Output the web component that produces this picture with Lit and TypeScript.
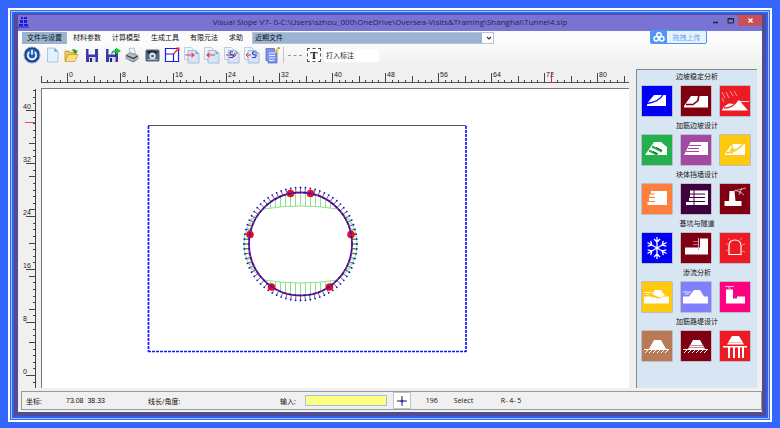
import { LitElement, html, svg, css } from "lit";
import { customElement } from "lit/decorators.js";

const doc = svg`<path d="M1.500 1.500h7l3 3v9h-10z" fill="#eef4fc" stroke="#b4c2d6" stroke-width=".8"/><path d="M5 4.500h8l3 3V17H5z" fill="#d6e4f7" stroke="#9fb3d2" stroke-width=".8"/><path d="M12.500 4.500v3.500H16z" fill="#7ba6da"/>`;
const floppy = svg`<path d="M3 3h12v13H3z" fill="#3a3aa6"/><path d="M5.500 3h6.500v5.500H5.500z" fill="#f6f6ff"/><path d="M6 11h6.500v5H6z" fill="#d8d8f4"/><path d="M7 12h2v4H7z" fill="#23237c"/>`;

const tools = [
  { name: "退出", icon: svg`<circle cx="9" cy="9" r="8" fill="#10387c" stroke="#8fa6c8"/><circle cx="9" cy="9" r="6.500" fill="#1f5fb4"/><path d="M6.500 5.800a4.200 4.200 0 1 0 5 0M9 3.800v5" fill="none" stroke="#fff" stroke-width="1.600"/>` },
  { name: "新建", icon: svg`<path d="M4.500 2h7l3.500 3.500V16H4.500z" fill="#e3f1fc" stroke="#9bbddb" stroke-width=".8"/><path d="M11.500 2v3.500H15z" fill="#4f9be0"/>` },
  { name: "打开", icon: svg`<path d="M2 15V5h4l1.500 1.500H13V9" fill="#f2c75a" stroke="#b98a28" stroke-width=".7"/><path d="M2 15.500l3.500-7H15l-3 7z" fill="#ffdf7c" stroke="#c09033" stroke-width=".7"/><path d="M8 4.500q3-3 5 0h2l-2.500 4-3-4h1.500z" fill="#2f9c25"/>` },
  { name: "保存", icon: floppy },
  { name: "另存为", icon: svg`${floppy}<path d="M8 9q0-5 5-5V1.500l5 3.500-5 3V6Q10 6 8 9z" fill="#1cc92b"/>` },
  { name: "打印", icon: svg`<path d="M6 2.500l5-.5 1.500 6H7z" fill="#f4f7fb" stroke="#93a0ae" stroke-width=".6"/><path d="M3 9l4-2.500 8 3v3.500l-4.500 3L3 12.500z" fill="#b7bcc3" stroke="#666c74" stroke-width=".6"/><path d="M3.500 9.500l7 3 4-2.500" fill="none" stroke="#30343a" stroke-width="1.200"/><path d="M6 14l4 1.500 3-1.500" fill="none" stroke="#4d8fd0"/>` },
  { name: "电话", icon: svg`<rect x="2.500" y="3.500" width="14" height="12" rx="1.500" fill="#52647c"/><path d="M4 5.500q5-2 10.500 0l-.5 2h-2.500L11 6H7.500L7 7.500H4.500z" fill="#1c2733"/><circle cx="9.500" cy="10" r="3.200" fill="#dbe4ec"/><circle cx="9.500" cy="10" r="1.300" fill="#44566c"/><path d="M4.500 13.500h10" stroke="#aab8c8"/>` },
  { name: "缩放", icon: svg`<path d="M2.500 2.500h13v13h-13zM2.500 8h8v7.500" fill="#fff" stroke="#1c1cf0" stroke-width="1.200"/><path d="M10.500 8L15 3" stroke="#e33" stroke-width="1.500"/><path d="M13 1.500h3.500V5z" fill="#e33"/>` },
  { name: "导出", icon: svg`${doc}<path d="M2.500 9h8M8.500 7l2.500 2-2.500 2" fill="none" stroke="#f0384c" stroke-width="1.100"/>` },
  { name: "导入", icon: svg`${doc}<path d="M4 9h8M6.500 7L4 9l2.500 2" fill="none" stroke="#f0384c" stroke-width="1.100"/>` },
  { name: "导出样式", icon: svg`${doc}<path d="M3 9h10M11 7l2 2-2 2" fill="none" stroke="#f0384c"/><path d="M10 6q-3-.8-3 1t2.500 1.800 0 2.700H6" fill="none" stroke="#2a48d0" stroke-width="1.200"/>` },
  { name: "导入样式", icon: svg`${doc}<path d="M3 9h5M5 7L3 9l2 2" fill="none" stroke="#f0384c"/><path d="M12.500 6q-3-.8-3 1t2.500 1.800 0 2.700H9" fill="none" stroke="#2a48d0" stroke-width="1.200"/>` },
  { name: "编辑", icon: svg`<path d="M3 2.500h8.500V5H14v12H5v-2.500H3z" fill="#7f93ee" stroke="#4f62c8" stroke-width=".7"/><path d="M6 7h6M6 9.500h6M6 12h6M6 14.500h5" stroke="#e8edff"/><path d="M11 6.500l3.500-4.500L16 3l-3.500 4.500z" fill="#f4c42c"/><path d="M14.500 2l1-1L17 2l-1 1z" fill="#e43a3a"/>` },
];

const hatch = svg`<path d="M6 19l-3 3M10 19l-3 3M14 19l-3 3M18 19l-3 3M22 19l-3 3M26 19l-3 3" stroke="#fff"/>`;

const groups = [
  { title: "边坡稳定分析", items: [
    { bg: "#0000fa", icon: svg`<path d="M5 20v-2.500L12 9h12v11z" fill="#fff"/><path d="M5 17.500Q17 16 21.500 8" fill="none" stroke="#0000fa" stroke-width="1.300"/>` },
    { bg: "#800012", icon: svg`<path d="M3 21.500V20L10 10h17v11.500z" fill="#fff"/><path d="M5 18.500h7l5-4 1-6" fill="none" stroke="#800012" stroke-width="1.600"/>` },
    { bg: "#ed1c24", icon: svg`<path d="M2 6l3 6M6 6l3 6M10 5l3 5M14 5l3 5M2 12l2 4" stroke="#ffb9b9" stroke-width=".8"/><path d="M2 24.500q1-4 7-7L14 18l5-4 9 10.500z" fill="#fff"/><path d="M4 22q9 0 13-7" fill="none" stroke="#ed1c24" stroke-width="1.500"/><path d="M20 15.500h9" stroke="#fff" stroke-width=".8"/>` } ] },
  { title: "加筋边坡设计", items: [
    { bg: "#22b14c", icon: svg`<path d="M3 20L12 7h7l6 5v8z" fill="#fff"/><path d="M10 11.500l10 5M7 15.500l8 4" stroke="#22b14c" stroke-width="2"/><path d="M14 12.500l6 3M11 16.500l5 2.500" stroke="#164924" stroke-width="1"/>` },
    { bg: "#a349a4", icon: svg`<path d="M3 20L9.500 7H27v13z" fill="#fff"/><path d="M8 10.500h12M7 13.500h11M5 16.500h13" stroke="#a349a4"/>` },
    { bg: "#ffc90e", icon: svg`<path d="M5 20v-1.500L12 9h13v11z" fill="#fff"/><path d="M6 18q11-1 17-9M12 8v11M10 15l5-1" fill="none" stroke="#ffc90e" stroke-width="1.300"/>` } ] },
  { title: "块体挡墙设计", items: [
    { bg: "#ff7f3f", icon: svg`<path d="M13 7h12v14H13zM9 7h5v2.500H9zM7.500 10.500H14V13H7.500zM7 14h7v3H7zM5.500 18H14v3H5.500z" fill="#fff"/>` },
    { bg: "#3f0040", icon: svg`<path d="M9 6.500h18v14.500H5v-3h3v-4h1v-4z" fill="#fff"/><path d="M7 10h17M6 13.500h18M5 17.500h19M13 6v15" stroke="#3f0040"/>` },
    { bg: "#800012", icon: svg`<path d="M9.500 7h5l1 10h6v5H4.500v-5H9z" fill="#fff"/><path d="M14 7l12-3M15 6l6 3M22 4l-3 7M19 7l5 4" stroke="#e7c4c4" stroke-width=".8"/>` } ] },
  { title: "基坑与隧道", items: [
    { bg: "#0000fa", icon: svg`<g stroke="#fff" stroke-width="1.300" fill="none">${[0, 60, 120, 180, 240, 300].map((a) => svg`<path transform="rotate(${a} 15 15)" d="M15 15V4M12 6l3 3 3-3"/>`)}</g>` },
    { bg: "#800012", icon: svg`<path d="M4 14.500h15v-9h8v16H4z" fill="#fff"/><path d="M17.500 5v12" stroke="#d4a6d6"/><path d="M12 8.500h5M12 11.500h5" stroke="#b86f90"/>` },
    { bg: "#ed1c24", icon: svg`<path d="M9 21.500V13q0-6 6-6t6 6v8.500z" fill="none" stroke="#fff" stroke-width="1.200"/><path d="M8 12l-2-2M10 7L8 5M20 7l2-2M22 12l3-1M8 17l-2 1M22 18l3 1" stroke="#ffaaaa" stroke-width=".7"/>` } ] },
  { title: "渗流分析", items: [
    { bg: "#ffc90e", icon: svg`<path d="M2 14.500h6l8 2 7-2h4v7H2z" fill="#fff"/><path d="M10 12l3-4h6l4 6q-6 2-9 0z" fill="#fff"/><path d="M2 10.500h8M4 12.500h3" stroke="#fff" stroke-width=".8"/>` },
    { bg: "#8080ff", icon: svg`<path d="M2 14.500h6L13 8h6l4 6.500h4v7H2z" fill="#fff"/><path d="M2 10h8M4 12h4" stroke="#fff" stroke-width=".8"/>` },
    { bg: "#ff0080", icon: svg`<path d="M6 7.500h7v9h4v-2h8v7H6z" fill="#fff"/><path d="M5 4.500h9M8 6h3" stroke="#ffc0e0" stroke-width=".9"/>` } ] },
  { title: "加筋路堤设计", items: [
    { bg: "#b97a57", icon: svg`<path d="M7 18l5-9h7l5 9zM2 18h25v1H2z" fill="#fff"/>${hatch}` },
    { bg: "#800012", icon: svg`<path d="M7 18l5-9h7l5 9zM2 18h25v1H2z" fill="#fff"/><path d="M8 14.500h15M7 16.500h17" stroke="#a06070" stroke-width=".7"/>${hatch}` },
    { bg: "#ed1c24", icon: svg`<path d="M7 13.500L12 5h7l5 8.500zM3 15h24v1.500H3zM8 16h2v11H8zM13 16h2v11h-2zM18 16h2v11h-2zM22 16h2v11h-2z" fill="#fff"/><path d="M8 11.500h14" stroke="#f8a0a0" stroke-width=".8"/>` } ] },
];

const range = (from: number, to: number) => Array.from({ length: to - from + 1 }, (_, i) => from + i);

/** Pixels per metre on both rulers. */
const STEP = 6.625;

/** Tunnel lining: centre within the soil block, and radius. */
const CX = 152.5, CY = 119, R = 51.5;
const nodes = [[-10, -50.5], [10, -50.5], [-50.5, -9.5], [50.5, -9.5], [-29, 43], [29, 43]];
const anchors = range(0, 71).map((i) => {
  const a = (i * Math.PI) / 36;
  return { c: Math.cos(a), s: Math.sin(a) };
});
const ribs = range(-6, 6).map((i) => {
  const x = i * 5;
  return { x, y: Math.sqrt(R * R - x * x), inner: 38 - (x * x) / 420 };
});
const sideRibs = range(-5, 5).map((i) => {
  const y = i * 5;
  return { y, x: Math.sqrt(R * R - y * y), outer: 56.5 - (y * y) / 100 };
});

@customElement("side-panel")
class SidePanel extends LitElement {
  static styles = css`
    :host {
      display: flex;
      flex-direction: column;
      background: #d8e5f2;
      border-top: 1px solid #83888f;
      border-left: 1px solid #83888f;
    }
    .title {
      margin: 0;
      height: 15px;
      font-size: 7px;
      font-weight: 400;
      line-height: 14px;
      text-align: center;
      color: #111;
    }
    .row { display: flex; gap: 7px; padding: 0 4px; margin-bottom: 2px; }
    .tile {
      box-sizing: border-box;
      width: 32px;
      height: 32px;
      padding: 0;
      border: 1px solid #bcc0c6;
      border-radius: 1px;
      background: #eee;
    }
    .pic { display: block; width: 30px; height: 30px; }
  `;
  render() {
    return groups.map((g) => html`
      <section>
        <h2 class="title">${g.title}</h2>
        <div class="row">
          ${g.items.map((it, i) => html`<button class="tile" aria-label="${g.title} ${i + 1}">
            <svg class="pic" viewBox="0 0 30 30"><rect width="30" height="30" fill=${it.bg}/>${it.icon}</svg>
          </button>`)}
        </div>
      </section>`);
  }
}

@customElement("slope-canvas")
class SlopeCanvas extends LitElement {
  static styles = css`
    :host { display: block; background: #fff; border-top: 1px solid #777; border-left: 1px solid #777; overflow: hidden; }
    .drawing { display: block; width: 100%; height: 299px; }
  `;
  render() {
    return html`<svg class="drawing" role="img" aria-label="隧道断面">
      <g transform="translate(106 36)">
        <path d="M0 .5h318" stroke="#555"/>
        <path d="M.5 1v226M318 1v226M0 226.500h318" fill="none" stroke="#1616ff" stroke-width="1.700" stroke-dasharray="3 1"/>
        <g transform="translate(${CX} ${CY})">
          <g stroke="#7fe07f" stroke-width=".9" fill="none">
            ${ribs.map((r) => svg`<path d="M${r.x} ${-r.y}V${-r.inner}M${r.x} ${r.y}V${r.inner + 1}"/>`)}
            ${sideRibs.map((r) => svg`<path d="M${-r.x} ${r.y}H${-r.outer}M${r.x} ${r.y}H${r.outer}"/>`)}
            <path d="M-37 -35Q0 -41 37 -35C50 -26 56.500 -14 56.500 0S50 26 37 36Q0 42 -37 36C-50 26 -56.500 14 -56.500 0S-50 -26 -37 -35z"/>
          </g>
          ${anchors.map(({ c, s }) => svg`<path d="M${c * R} ${s * R}L${c * 56} ${s * 56}" stroke="#444" stroke-width=".8"/><circle cx=${c * 56.5} cy=${s * 56.5} r=".9" fill="#1212c8"/>`)}
          ${nodes.map(([x, y]) => svg`<circle cx=${x} cy=${y} r="3.800" fill="#f50a14"/>`)}
          <circle r=${R} fill="none" stroke="#8b1a9c" stroke-width="1.800"/>
          <circle r=${R} fill="none" stroke="#14149c" stroke-width="1.200" stroke-dasharray="3 2"/>
        </g>
      </g>
    </svg>`;
  }
}

@customElement("app-root")
class AppRoot extends LitElement {
  static styles = css`
    :host {
      display: block;
      font-family: "Open Sans", "Noto Sans CJK SC", sans-serif;
      font-size: 7px;
      color: #111;
    }
    .backdrop { box-sizing: border-box; display: flex; min-height: 100vh; padding: 8px; background: #36f; }
    .mat { display: flex; flex: 1; min-width: 0; border: 2px solid #fff; padding: 1px; background: #36f; }
    .rim { display: flex; flex: 1; min-width: 0; border: 1px solid #a9c3ff; padding: 2px; background: #3260ee; }
    .window {
      position: relative;
      display: flex;
      flex: 1;
      flex-direction: column;
      min-width: 0;
      border: solid #514c96;
      border-width: 1px 4px 4px;
      background: #f0f0f0;
    }
    .titlebar { display: flex; height: 16px; background: #7974d4; color: #25254a; }
    .logo { width: 12px; height: 12px; margin: 1px 0 0; }
    .caption { flex: 1; margin: 0; padding-left: 42px; text-align: center; font-size: 8px; font-weight: 400; line-height: 14px; white-space: nowrap; }
    .winbtns { display: flex; height: 11px; }
    .winbtn { width: 15px; padding: 0; border: 0; background: none; }
    .winbtn.close { width: 24px; background: #c9505a; }
    .glyph { display: block; width: 9px; height: 9px; margin: 0 auto; }
    .menubar { display: flex; gap: 1px; height: 13px; padding: 1px 4px 0; background: #fbfbfb; box-sizing: border-box; }
    .item { padding: 0 5px; border: 0; background: none; font: inherit; line-height: 10px; color: #111; white-space: nowrap; }
    .item.open { background: #9ab4d0; }
    .recent {
      appearance: none;
      width: 242px;
      margin: 0 0 0 3px;
      padding: 0 2px;
      border: 1px solid #b8c4d4;
      border-radius: 0;
      background: linear-gradient(#9ab4d4, #9ab4d4) 0 / calc(100% - 11px) no-repeat #fff;
      font: inherit;
      line-height: 10px;
      color: #111;
    }
    .pick { position: relative; display: flex; }
    .chevron { position: absolute; right: 2px; top: 3px; width: 6px; height: 6px; }
    .toolbar { display: flex; align-items: center; height: 22px; padding: 0 4px; background: linear-gradient(#fbfbfb, #f0f0f0); }
    .tool { width: 20px; height: 20px; padding: 1px; border: 0; background: none; }
    .toolpic { display: block; width: 18px; height: 18px; }
    .sep { width: 1px; height: 16px; margin: 0 4px 0 1px; background: #c4c4c4; }
    .dashes { width: 14px; border-top: 1px dashed #999; }
    .textbtn {
      width: 14px; height: 14px; margin-left: 5px; padding: 0; border: 1px dashed #555; background: #fff;
      font: bold 11px/11px "Liberation Serif", serif; color: #111;
    }
    .note { width: 55px; height: 13px; margin-left: 3px; padding: 0 2px; border: 0; box-sizing: border-box; background: #fff; font: inherit; color: #222; }
    .upload {
      position: absolute; right: 55px; top: 15px; display: flex; align-items: center; width: 57px; height: 14px; padding: 0;
      box-sizing: border-box; border: 1px solid #4e97f4; border-radius: 2px; background: #e8f2ff; font: inherit; color: #6da3ee;
    }
    .cloud { width: 16px; height: 12px; background: #4e97f4; }
    .uptext { flex: 1; text-align: center; }
    .work { display: grid; grid-template-columns: 23px minmax(0, 1fr) 121px; grid-template-rows: 22px 1fr; flex: 1; padding-right: 5px; }
    .hruler { width: 100%; height: 22px; overflow: hidden; }
    .vruler { width: 23px; height: 300px; }
    .hruler, .vruler { display: block; font-family: "Liberation Sans", sans-serif; font-size: 7px; fill: #222; }
    .hwrap { grid-column: 2; padding-right: 7px; }
    .stage { margin-right: 7px; }
    .side { grid-column: 3; grid-row: 1 / 3; margin-top: 3px; }
    .status {
      display: flex; align-items: center; height: 17px; margin: 3px 0 2px 3px;
      border: 1px solid #9a9a9a; background: #f0f0f0; white-space: nowrap;
    }
    .label { width: 40px; padding-left: 4px; }
    .coords { width: 82px; font-family: "Liberation Sans", sans-serif; }
    .length { width: 132px; }
    .entry { display: flex; align-items: center; gap: 9px; }
    .field { box-sizing: border-box; width: 82px; height: 11px; padding: 0 2px; border: 1px solid #9cc0e6; background: #ffff80; font: inherit; }
    .cross { width: 18px; height: 17px; margin: 0 15px 0 6px; padding: 0; border: 1px solid #c4c4c4; background: #fff; }
    .crosspic { display: block; width: 14px; height: 14px; margin: 0 auto; }
    .count { width: 28px; }
    .mode { width: 47px; }
  `;

  render() {
    return html`
      <div class="backdrop"><div class="mat"><div class="rim"><main class="window">
        <header class="titlebar">
          <svg class="logo" viewBox="0 0 12 12"><path d="M3 1h2v2H3zM6 1h3v2H6zM2 4h3v3H2zM6 4h3v3H6zM1 8h4v2H1zM6 8h4v2H6z" fill="#1a1ae4"/><path d="M0 11h11" stroke="#2222c4"/></svg>
          <h1 class="caption">Visual Slope V7- 0-C:\\Users\\szhou_000\\OneDrive\\Oversea-Visits&amp;Training\\Shanghai\\Tunnel4.slp</h1>
          <div class="winbtns">
            <button class="winbtn" aria-label="最小化"><svg class="glyph" viewBox="0 0 9 9"><path d="M2 6.500h5" stroke="#222" stroke-width="1.500"/></svg></button>
            <button class="winbtn" aria-label="最大化"><svg class="glyph" viewBox="0 0 9 9"><path d="M2 2.500h5.500v4.500H2zM2 3h5.500" fill="none" stroke="#222"/></svg></button>
            <button class="winbtn close" aria-label="关闭"><svg class="glyph" viewBox="0 0 9 9"><path d="M2.500 2.500l4 4M6.500 2.500l-4 4" stroke="#fff" stroke-width="1.300"/></svg></button>
          </div>
        </header>
        <nav class="menubar">
          ${["文件与设置", "材料参数", "计算模型", "生成工具", "有限元法", "求助"].map((m, i) => html`<button class="item ${i === 0 ? "open" : ""}">${m}</button>`)}
          <div class="pick">
            <select class="recent" aria-label="近期文件"><option>近期文件</option></select>
            <svg class="chevron" viewBox="0 0 6 6"><path d="M1 2l2 2 2-2" fill="none" stroke="#333" stroke-width="1.200"/></svg>
          </div>
        </nav>
        <button class="upload">
          <svg class="cloud" viewBox="0 0 16 12"><g fill="none" stroke="#fff" stroke-width="1.500"><circle cx="8" cy="4" r="2.200"/><circle cx="5.200" cy="7.800" r="2.200"/><circle cx="10.800" cy="7.800" r="2.200"/></g></svg>
          <span class="uptext">拖拽上传</span>
        </button>
        <div class="toolbar">
          ${tools.map((t) => html`<button class="tool" aria-label=${t.name}><svg class="toolpic" viewBox="0 0 18 18">${t.icon}</svg></button>`)}
          <span class="sep"></span><span class="dashes"></span>
          <button class="textbtn">T</button>
          <input class="note" aria-label="标注" value="打入标注">
        </div>
        <div class="work">
          <div class="hwrap"><svg class="hruler">
            <path d="M0 16.500H2000" stroke="#555"/>
            ${range(-4, 300).map((u) => {
              const h = u % 8 === 0 ? 10 : u % 4 === 0 ? 7 : 3;
              return svg`<path d="M${Math.round(27 + u * STEP) - 0.5} ${17 - h}v${h}" stroke="#444"/>`;
            })}
            ${range(0, 10).map((n) => svg`<text x=${28 + n * 53} y="11">${n * 8}</text>`)}
            <path d="M510.500 7v10" stroke="#e02030"/>
          </svg></div>
          <svg class="vruler">
            <path d="M17.500 1V300" stroke="#444"/>
            ${range(-1, 43).map((u) => {
              const w = u % 8 === 0 ? 10 : u % 5 === 0 ? 7 : 3;
              return svg`<path d="M${18 - w} ${Math.round(287 - u * STEP) + 0.5}h${w}" stroke="#444"/>`;
            })}
            ${range(0, 5).map((n) => svg`<text x="5" y=${286 - n * 53}>${n * 8}</text>`)}
            <path d="M7 34.500h10" stroke="#f04848"/>
          </svg>
          <slope-canvas class="stage"></slope-canvas>
          <side-panel class="side"></side-panel>
        </div>
        <footer class="status">
          <span class="label">坐标:</span><span class="coords">73.08&nbsp; 38.33</span>
          <span class="length">线长/角度:</span>
          <label class="entry">输入:<input class="field"></label>
          <button class="cross" aria-label="捕捉"><svg class="crosspic" viewBox="0 0 14 14"><path d="M7 2v10M2 7h10" stroke="#222"/><circle cx="7" cy="7" r="1.500" fill="#2a2ae0"/></svg></button>
          <span class="count">196</span><span class="mode">Select</span><span>R- 4- 5</span>
        </footer>
      </main></div></div></div>`;
  }
}
